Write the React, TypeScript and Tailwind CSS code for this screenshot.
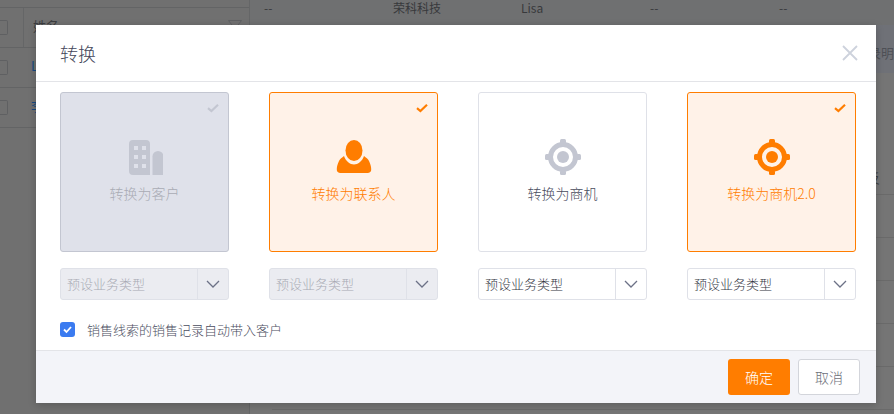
import { ReactNode } from "react";

const font = { fontFamily: '"Noto Sans CJK SC", "Noto Sans", sans-serif' };

function Check({ color }: { color: string }) {
  return (
    <svg className="absolute right-[9px] top-[9px] h-[12px] w-[12px]" viewBox="0 0 12 12" fill="none">
      <path d="M1 6.200 L4.400 9 L11 2.800" stroke={color} strokeWidth="2.200" />
    </svg>
  );
}

function BuildingIcon() {
  return (
    <svg width="36" height="36" viewBox="0 0 36 36" fill="#c3c6d1">
      <path fillRule="evenodd" d="M6 1h13a4 4 0 0 1 4 4v31H6a4 4 0 0 1-4-4V5a4 4 0 0 1 4-4zM7 7v4h4V7zm8 0v4h4V7zM7 16v4h4v-4zm8 0v4h4v-4zM7 25v4h4v-4zm8 0v4h4v-4z" />
      <path d="M25.500 17.500a5.500 5.500 0 0 1 11 0V36H25.500z" />
    </svg>
  );
}

function PersonIcon() {
  return (
    <svg width="36" height="36" viewBox="0 0 36 36" fill="#ff7d00">
      <ellipse cx="18" cy="11.500" rx="8.500" ry="10.500" />
      <path d="M8 17C10 22.500 14 25.500 18 25.500S26 22.500 28 17C30 18.500 32 20 33 22C34.200 24.500 35.200 27.500 35.200 30A3.700 3.700 0 0 1 32 34H4A3.700 3.700 0 0 1 .8 30C.8 27.500 1.800 24.500 3 22C4 20 6 18.500 8 17z" />
    </svg>
  );
}

function TargetIcon({ color }: { color: string }) {
  return (
    <svg width="36" height="36" viewBox="0 0 36 36" fill={color}>
      <path fillRule="evenodd" d="M18 3a15 15 0 1 1 0 30a15 15 0 0 1 0-30zm0 5a10 10 0 1 0 0 20a10 10 0 0 0 0-20z" />
      <circle cx="18" cy="18" r="6" />
      <rect x="15" y="0" width="6" height="5" rx="1.500" />
      <rect x="15" y="31" width="6" height="5" rx="1.500" />
      <rect x="0" y="15" width="5" height="6" rx="1.500" />
      <rect x="31" y="15" width="5" height="6" rx="1.500" />
    </svg>
  );
}

function Card({ state, icon, label }: { state: "disabled" | "active" | "normal"; icon: ReactNode; label: string }) {
  const cls =
    state === "disabled"
      ? "border-[#c3c6d1] bg-[#dfe1ea] text-[#a9abb4]"
      : state === "active"
        ? "border-[#ff7d00] bg-[#fff2e8] text-[#ff7d00]"
        : "border-[#dfe1e8] bg-white text-[#4a4d5e]";
  return (
    <div className={`relative flex h-[160px] flex-col items-center rounded-[3px] border pt-[46px] ${cls}`}>
      {state === "disabled" && <Check color="#c3c6d1" />}
      {state === "active" && <Check color="#ff7d00" />}
      {icon}
      <span className="mt-[7px] text-[14px] font-light leading-[22px]">{label}</span>
    </div>
  );
}

function TypeSelect({ disabled }: { disabled?: boolean }) {
  return (
    <div
      className={`flex h-[32px] items-center rounded-[3px] border border-[#dfe1e8] text-[13px] font-light ${
        disabled ? "bg-[#ebecf1] text-[#a8aab3]" : "bg-white text-[#33353f]"
      }`}
    >
      <span className="flex-1 pl-[6px]">预设业务类型</span>
      <span className="flex h-full w-[31px] items-center justify-center border-l border-[#dfe1e8] pr-[1px]">
        <svg width="14" height="8" viewBox="0 0 14 8" fill="none" stroke="#6c7186" strokeWidth="1.300">
          <path d="M1 1 L7 7 L13 1" />
        </svg>
      </span>
    </div>
  );
}

function BackRow({ h, children }: { h: string; children: ReactNode }) {
  return <div className={`flex border-b border-[#636465] ${h}`}>{children}</div>;
}

function Box() {
  return <span className="h-[15px] w-[8px] rounded-r-[2px] border border-l-0 border-[#5f6062]" />;
}

export default function App() {
  return (
    <div className="relative h-[414px] w-[894px] overflow-hidden bg-[#707070]" style={font}>
      {/* page behind the overlay */}
      <div className="flex h-full">
        <div className="w-[250px] border-r border-[#656667]">
          <div className="h-[8px] border-b border-[#636465]" />
          <BackRow h="h-[40px]">
            <div className="flex w-[24px] items-center border-r border-[#656667]">
              <Box />
            </div>
            <span className="ml-[9px] mt-[8px] text-[13px] text-[#3c3d40]">姓名</span>
            <svg className="ml-auto mr-[7px] mt-[12px]" width="14" height="10" viewBox="0 0 14 10" fill="none" stroke="#5f6062">
              <path d="M0.500 0.500 H13.500 L7 9 Z" />
            </svg>
          </BackRow>
          <BackRow h="h-[40px]">
            <div className="flex w-[24px] items-center">
              <Box />
            </div>
            <span className="ml-[7px] mt-[8px] text-[13px] text-[#174a80]">Lisa</span>
          </BackRow>
          <BackRow h="h-[40px]">
            <div className="flex w-[24px] items-center">
              <Box />
            </div>
            <span className="ml-[7px] mt-[8px] text-[13px] text-[#174a80]">李</span>
          </BackRow>
        </div>
        <div className="flex-1 bg-[#757575]">
          <div className="flex h-[25px] items-start bg-[#6f7071] text-[12px] leading-[16px] text-[#38393c]">
            <span className="ml-[14px] w-[129px]">--</span>
            <span className="w-[128px]">荣科科技</span>
            <span className="w-[129px]">Lisa</span>
            <span className="w-[129px]">--</span>
            <span>--</span>
          </div>
          <div className="flex h-[48px] items-start justify-end bg-[#6f7177] pt-[18px] text-[13px] leading-[20px] text-[#4e5056]">
            <span>录明</span>
          </div>
          <div className="ml-[22px]">
            <div className="flex h-[122px] justify-end border-b border-[#6a6a6a] pr-[14px] pt-[95px] text-[13px] leading-[20px] text-[#3c3d40]">
              <span>反</span>
            </div>
            <div className="h-[43px] border-b border-[#6a6a6a]" />
            <div className="h-[43px] border-b border-[#6a6a6a]" />
            <div className="h-[43px] border-b border-[#6a6a6a]" />
            <div className="h-[43px] border-b border-[#6a6a6a]" />
            <div className="h-[43px] border-b border-[#6a6a6a]" />
          </div>
        </div>
      </div>

      {/* modal */}
      <div className="absolute left-[36px] top-[25px] flex h-[378px] w-[840px] flex-col bg-white shadow-[0_2px_8px_rgba(0,0,0,0.2)]">
        <div className="flex h-[57px] items-center justify-between border-b border-[#e3e4e8] pl-[24px] pr-[18px]">
          <span className="text-[18px] font-light text-[#44465a]">转换</span>
          <svg width="16" height="16" viewBox="0 0 16 16" fill="none" stroke="#cdd2dc" strokeWidth="1.800">
            <path d="M1 1 L15 15 M15 1 L1 15" />
          </svg>
        </div>
        <div className="flex-1 pl-[24px] pr-[20px] pt-[10px]">
          <div className="grid grid-cols-4 gap-x-[40px]">
            <Card state="disabled" icon={<BuildingIcon />} label="转换为客户" />
            <Card state="active" icon={<PersonIcon />} label="转换为联系人" />
            <Card state="normal" icon={<TargetIcon color="#c3c6d1" />} label="转换为商机" />
            <Card state="active" icon={<TargetIcon color="#ff7d00" />} label="转换为商机2.0" />
          </div>
          <div className="mt-[16px] grid grid-cols-4 gap-x-[40px]">
            <TypeSelect disabled />
            <TypeSelect disabled />
            <TypeSelect />
            <TypeSelect />
          </div>
          <div className="mt-[22px] flex items-center">
            <span className="flex h-[15px] w-[15px] items-center justify-center rounded-[3px] bg-[#3b7bf0]">
              <svg width="11" height="11" viewBox="0 0 11 11" fill="none" stroke="white" strokeWidth="1.800">
                <path d="M2 5.500 L4.500 8 L9 3" />
              </svg>
            </span>
            <span className="ml-[12px] text-[13px] font-light leading-[15px] text-[#4a4d5e]">销售线索的销售记录自动带入客户</span>
          </div>
        </div>
        <div className="flex h-[53px] items-start justify-end gap-[8px] border-t border-[#e3e4e8] bg-[#f3f4f9] pr-[16px] pt-[8px]">
          <button className="h-[36px] w-[62px] rounded-[3px] bg-[#ff7d00] text-[14px] font-light text-white">确定</button>
          <button className="h-[36px] w-[62px] rounded-[3px] border border-[#d3d5db] bg-white text-[14px] font-light text-[#6e7079]">取消</button>
        </div>
      </div>
    </div>
  );
}
